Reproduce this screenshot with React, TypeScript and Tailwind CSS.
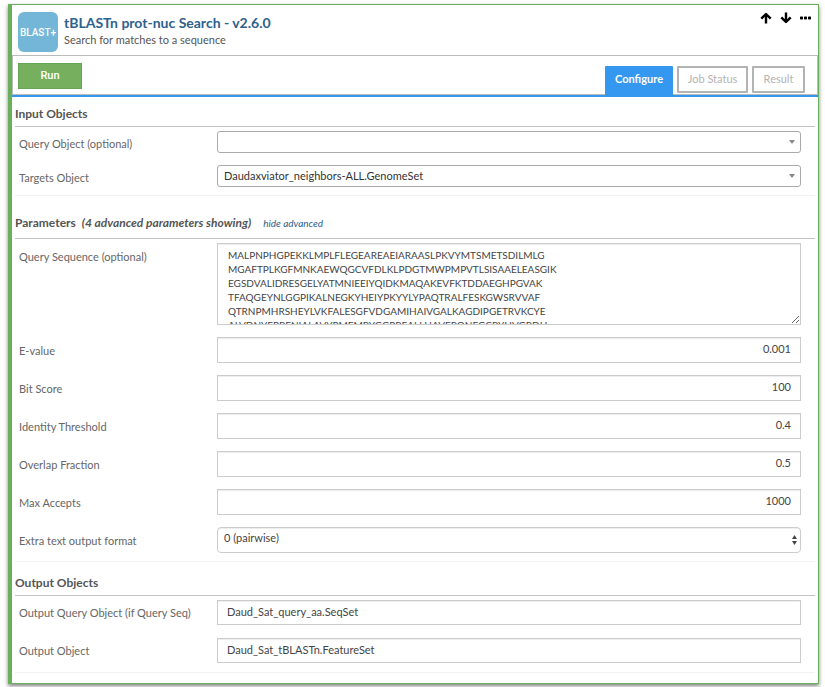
import React from "react";

const SEQUENCE = [
  "MALPNPHGPEKKLMPLFLEGEAREAEIARAASLPKVYMTSMETSDILMLG",
  "MGAFTPLKGFMNKAEWQGCVFDLKLPDGTMWPMPVTLSISAAELEASGIK",
  "EGSDVALIDRESGELYATMNIEEIYQIDKMAQAKEVFKTDDAEGHPGVAK",
  "TFAQGEYNLGGPIKALNEGKYHEIYPKYYLYPAQTRALFESKGWSRVVAF",
  "QTRNPMHRSHEYLVKFALESGFVDGAMIHAIVGALKAGDIPGETRVKCYE",
  "ALVDNYFPRENIALAVYPMFMRYGGPREALLHAVFRQNFGCRYHVGRDH",
].join("\n");

const FIELD = "block w-full border border-[#ccc] bg-white text-[#444] shadow-[inset_0_1px_1px_rgba(0,0,0,0.075)] outline-none";

function Row({ id, label, className = "", labelPad = "pt-[5px]", children }: { id: string; label: string; className?: string; labelPad?: string; children: React.ReactNode }) {
  return (
    <div className={`flex items-start pl-1 pr-3.5 ${className}`}>
      <label htmlFor={id} className={`w-[198px] shrink-0 text-[11px] leading-4 text-[#666] ${labelPad}`}>
        {label}
      </label>
      <div className="relative min-w-0 flex-1">{children}</div>
    </div>
  );
}

function ObjectSelect({ id, value }: { id: string; value: string }) {
  return (
    <>
      <select id={id} defaultValue={value} className="block h-[22px] w-full appearance-none rounded-[3px] border border-[#aaa] bg-white px-1.5 text-[11px] leading-4 text-[#333] outline-none">
        <option>{value}</option>
      </select>
      <svg className="pointer-events-none absolute right-1.5 top-[9px]" width="6" height="4" viewBox="0 0 6 4" aria-hidden="true">
        <path d="M0 0h6L3 4z" fill="#888" />
      </svg>
    </>
  );
}

function Section({ title, children, extra }: { title: string; children: React.ReactNode; extra?: React.ReactNode }) {
  return (
    <section className="border-b border-[#f2f2f2]">
      <div className="flex items-start border-b border-[#c4c4c4] pb-1 pt-[3px] leading-4">
        <h2 className="text-xs font-bold leading-4 text-[#555]">{title}</h2>
        {extra}
      </div>
      {children}
    </section>
  );
}

function Arrow({ down = false }: { down?: boolean }) {
  return (
    <svg className={down ? "rotate-180" : ""} width="12" height="12" viewBox="0 0 12 12" fill="none" stroke="currentColor" strokeWidth="2.400" aria-hidden="true">
      <path d="M6 11.500V2M1.300 6.700L6 2l4.700 4.700" strokeLinejoin="round" />
    </svg>
  );
}

const NUMBERS = [
  { id: "evalue", label: "E-value", value: "0.001" },
  { id: "bitscore", label: "Bit Score", value: "100" },
  { id: "identity", label: "Identity Threshold", value: "0.4" },
  { id: "overlap", label: "Overlap Fraction", value: "0.5" },
  { id: "accepts", label: "Max Accepts", value: "1000" },
];

export default function App() {
  return (
    <main className="bg-white pb-[3px] pl-2 pr-1.5 pt-1 font-['Lato',sans-serif]">
      <article className="border border-l-4 border-[#6aaf5c] pb-2.5 shadow-[0_2px_4px_rgba(0,0,0,0.5)]">
        <header className="flex h-[50px] items-start px-1.5 pt-[7px]">
          <div className="flex size-10 shrink-0 items-center justify-center rounded-md bg-[#73b6d8]">
            <span className="font-['Roboto',sans-serif] text-[10px] font-medium text-white">BLAST+</span>
          </div>
          <div className="ml-1.5 flex-1 pt-0.5">
            <h1 className="text-sm font-bold leading-[18px] text-[#2e618d]">tBLASTn prot-nuc Search - v2.6.0</h1>
            <p className="text-[11px] leading-4 text-[#555]">Search for matches to a sequence</p>
          </div>
          <div className="flex gap-2 text-black">
            <button type="button" aria-label="Move up"><Arrow /></button>
            <button type="button" aria-label="Move down"><Arrow down /></button>
            <button type="button" aria-label="More options">
              <svg width="12" height="12" viewBox="0 0 12 12" fill="currentColor" aria-hidden="true">
                <rect x="0" y="4.500" width="3" height="3" rx="0.700" />
                <rect x="4" y="4.500" width="3" height="3" rx="0.700" />
                <rect x="8" y="4.500" width="3" height="3" rx="0.700" />
              </svg>
            </button>
          </div>
        </header>

        <div className="flex h-10 items-start justify-between border border-[#bbb] pl-[5px] pr-3">
          <button type="button" className="mt-[7px] h-[26px] w-16 border border-[#67a455] bg-[#76b05f] font-['Roboto',sans-serif] text-[11px] font-medium text-white">Run</button>
          <nav className="mt-2.5 flex items-start gap-1 text-[11px]">
            <button type="button" className="h-[29px] w-[68px] rounded-t-[1px] bg-[#3498f0] pb-0.5 font-bold text-white">Configure</button>
            <button type="button" className="h-[27px] w-[71px] rounded-[1px] border-2 border-[#b3b3b3] text-[#b3b3b3]">Job Status</button>
            <button type="button" className="h-[27px] w-[53px] rounded-[1px] border-2 border-[#b3b3b3] text-[#b3b3b3]">Result</button>
          </nav>
        </div>
        <div className="h-0.5 bg-[#3498f0]" />

        <div className="px-[3px] pt-1.5">
          <Section title="Input Objects">
            <Row id="query" label="Query Object (optional)" className="h-[34px] pt-1"><ObjectSelect id="query" value="" /></Row>
            <Row id="targets" label="Targets Object" className="h-[34px] pt-1"><ObjectSelect id="targets" value="Daudaxviator_neighbors-ALL.GenomeSet" /></Row>
          </Section>

          <div className="h-4" />
          <Section
            title="Parameters"
            extra={
              <>
                <span className="mb-[3px] ml-1.5 text-xs font-bold italic leading-4 text-[#555]">(4 advanced parameters showing)</span>
                <a href="#advanced" className="ml-3 text-[10px] italic leading-4 text-[#2e618d]">hide advanced</a>
              </>
            }
          >
            <Row id="sequence" label="Query Sequence (optional)" className="pt-1" labelPad="pt-1.5">
              <textarea id="sequence" defaultValue={SEQUENCE} className={`${FIELD} h-[82px] resize-y px-2.5 py-1 text-[10px] leading-[14px] [scrollbar-width:none]`} />
            </Row>
            {NUMBERS.map((n) => (
              <Row key={n.id} id={n.id} label={n.label} className="pt-3" labelPad="pt-1.5">
                <input id={n.id} type="text" defaultValue={n.value} className={`${FIELD} h-[26px] px-[9px] pb-[3px] text-right text-[11px]`} />
              </Row>
            ))}
            <Row id="format" label="Extra text output format" className="pb-2 pt-3" labelPad="pt-1.5">
              <select id="format" defaultValue="0 (pairwise)" className={`${FIELD} h-[26px] appearance-none rounded px-1.5 pb-[3px] text-[11px]`}>
                <option>0 (pairwise)</option>
              </select>
              <svg className="pointer-events-none absolute right-1 top-2" width="5" height="10" viewBox="0 0 5 10" aria-hidden="true">
                <path d="M0 4h5L2.500 0zM0 6h5L2.500 10z" fill="#444" />
              </svg>
            </Row>
          </Section>

          <div className="h-2.5" />
          <Section title="Output Objects">
            <Row id="outquery" label="Output Query Object (if Query Seq)" className="pt-1">
              <input id="outquery" type="text" defaultValue="Daud_Sat_query_aa.SeqSet" className={`${FIELD} h-[25px] px-[9px] pb-[3px] text-[11px]`} />
            </Row>
            <Row id="output" label="Output Object" className="pb-[9px] pt-[13px]">
              <input id="output" type="text" defaultValue="Daud_Sat_tBLASTn.FeatureSet" className={`${FIELD} h-[25px] px-[9px] pb-[3px] text-[11px]`} />
            </Row>
          </Section>
        </div>
      </article>
    </main>
  );
}
